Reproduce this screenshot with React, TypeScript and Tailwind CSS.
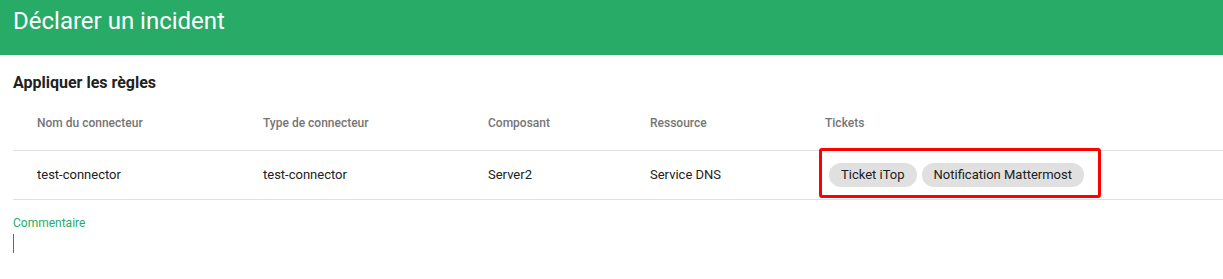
import React from "react";

const cols = [
  { label: "Nom du connecteur", w: "w-[226px]" },
  { label: "Type de connecteur", w: "w-[225px]" },
  { label: "Composant", w: "w-[162px]" },
  { label: "Ressource", w: "w-[175px]" },
];

export default function App() {
  return (
    <div className="w-[1223px] h-[279px] bg-white overflow-hidden" style={{ fontFamily: "Roboto, 'Noto Sans', sans-serif" }}>
      <div className="h-[55px] bg-[#27ab67] pl-[13px] pt-[5px]">
        <h1 className="text-[24px] leading-[32px] text-white font-normal">Déclarer un incident</h1>
      </div>
      <div className="pl-[13px]">
        <h2 className="mt-[16px] text-[16px] leading-[24px] font-bold text-[#212121]">Appliquer les règles</h2>
        <div className="relative">
          <div className="flex h-[56px] items-center border-b border-[#e0e0e0] text-[12px] font-medium text-[#757575]">
            {cols.map((c) => (
              <div key={c.label} className={`${c.w} pl-[24px]`}>{c.label}</div>
            ))}
            <div className="pl-[24px]">Tickets</div>
          </div>
          <div className="flex h-[49px] items-center border-b border-[#e0e0e0] text-[13px] text-[#212121]">
            <div className="w-[226px] pl-[24px]">test-connector</div>
            <div className="w-[225px] pl-[24px]">test-connector</div>
            <div className="w-[162px] pl-[24px]">Server2</div>
            <div className="w-[175px] pl-[24px]">Service DNS</div>
            <div className="pl-[28px] flex gap-[5px]">
              <span className="h-[24px] px-[12px] rounded-full bg-[#e0e0e0] flex items-center">Ticket iTop</span>
              <span className="h-[24px] px-[12px] rounded-full bg-[#e0e0e0] flex items-center">Notification Mattermost</span>
            </div>
          </div>
          <div className="absolute left-[806px] top-[53px] w-[282px] h-[50px] border-[3px] border-[#ff0000] rounded-[3px]" />
        </div>
        <div className="mt-[15px] text-[12px] leading-[16px] text-[#27ab67]">Commentaire</div>
        <div className="mt-[3px] w-px h-[19px] bg-[#1f8f55]" />
      </div>
    </div>
  );
}
